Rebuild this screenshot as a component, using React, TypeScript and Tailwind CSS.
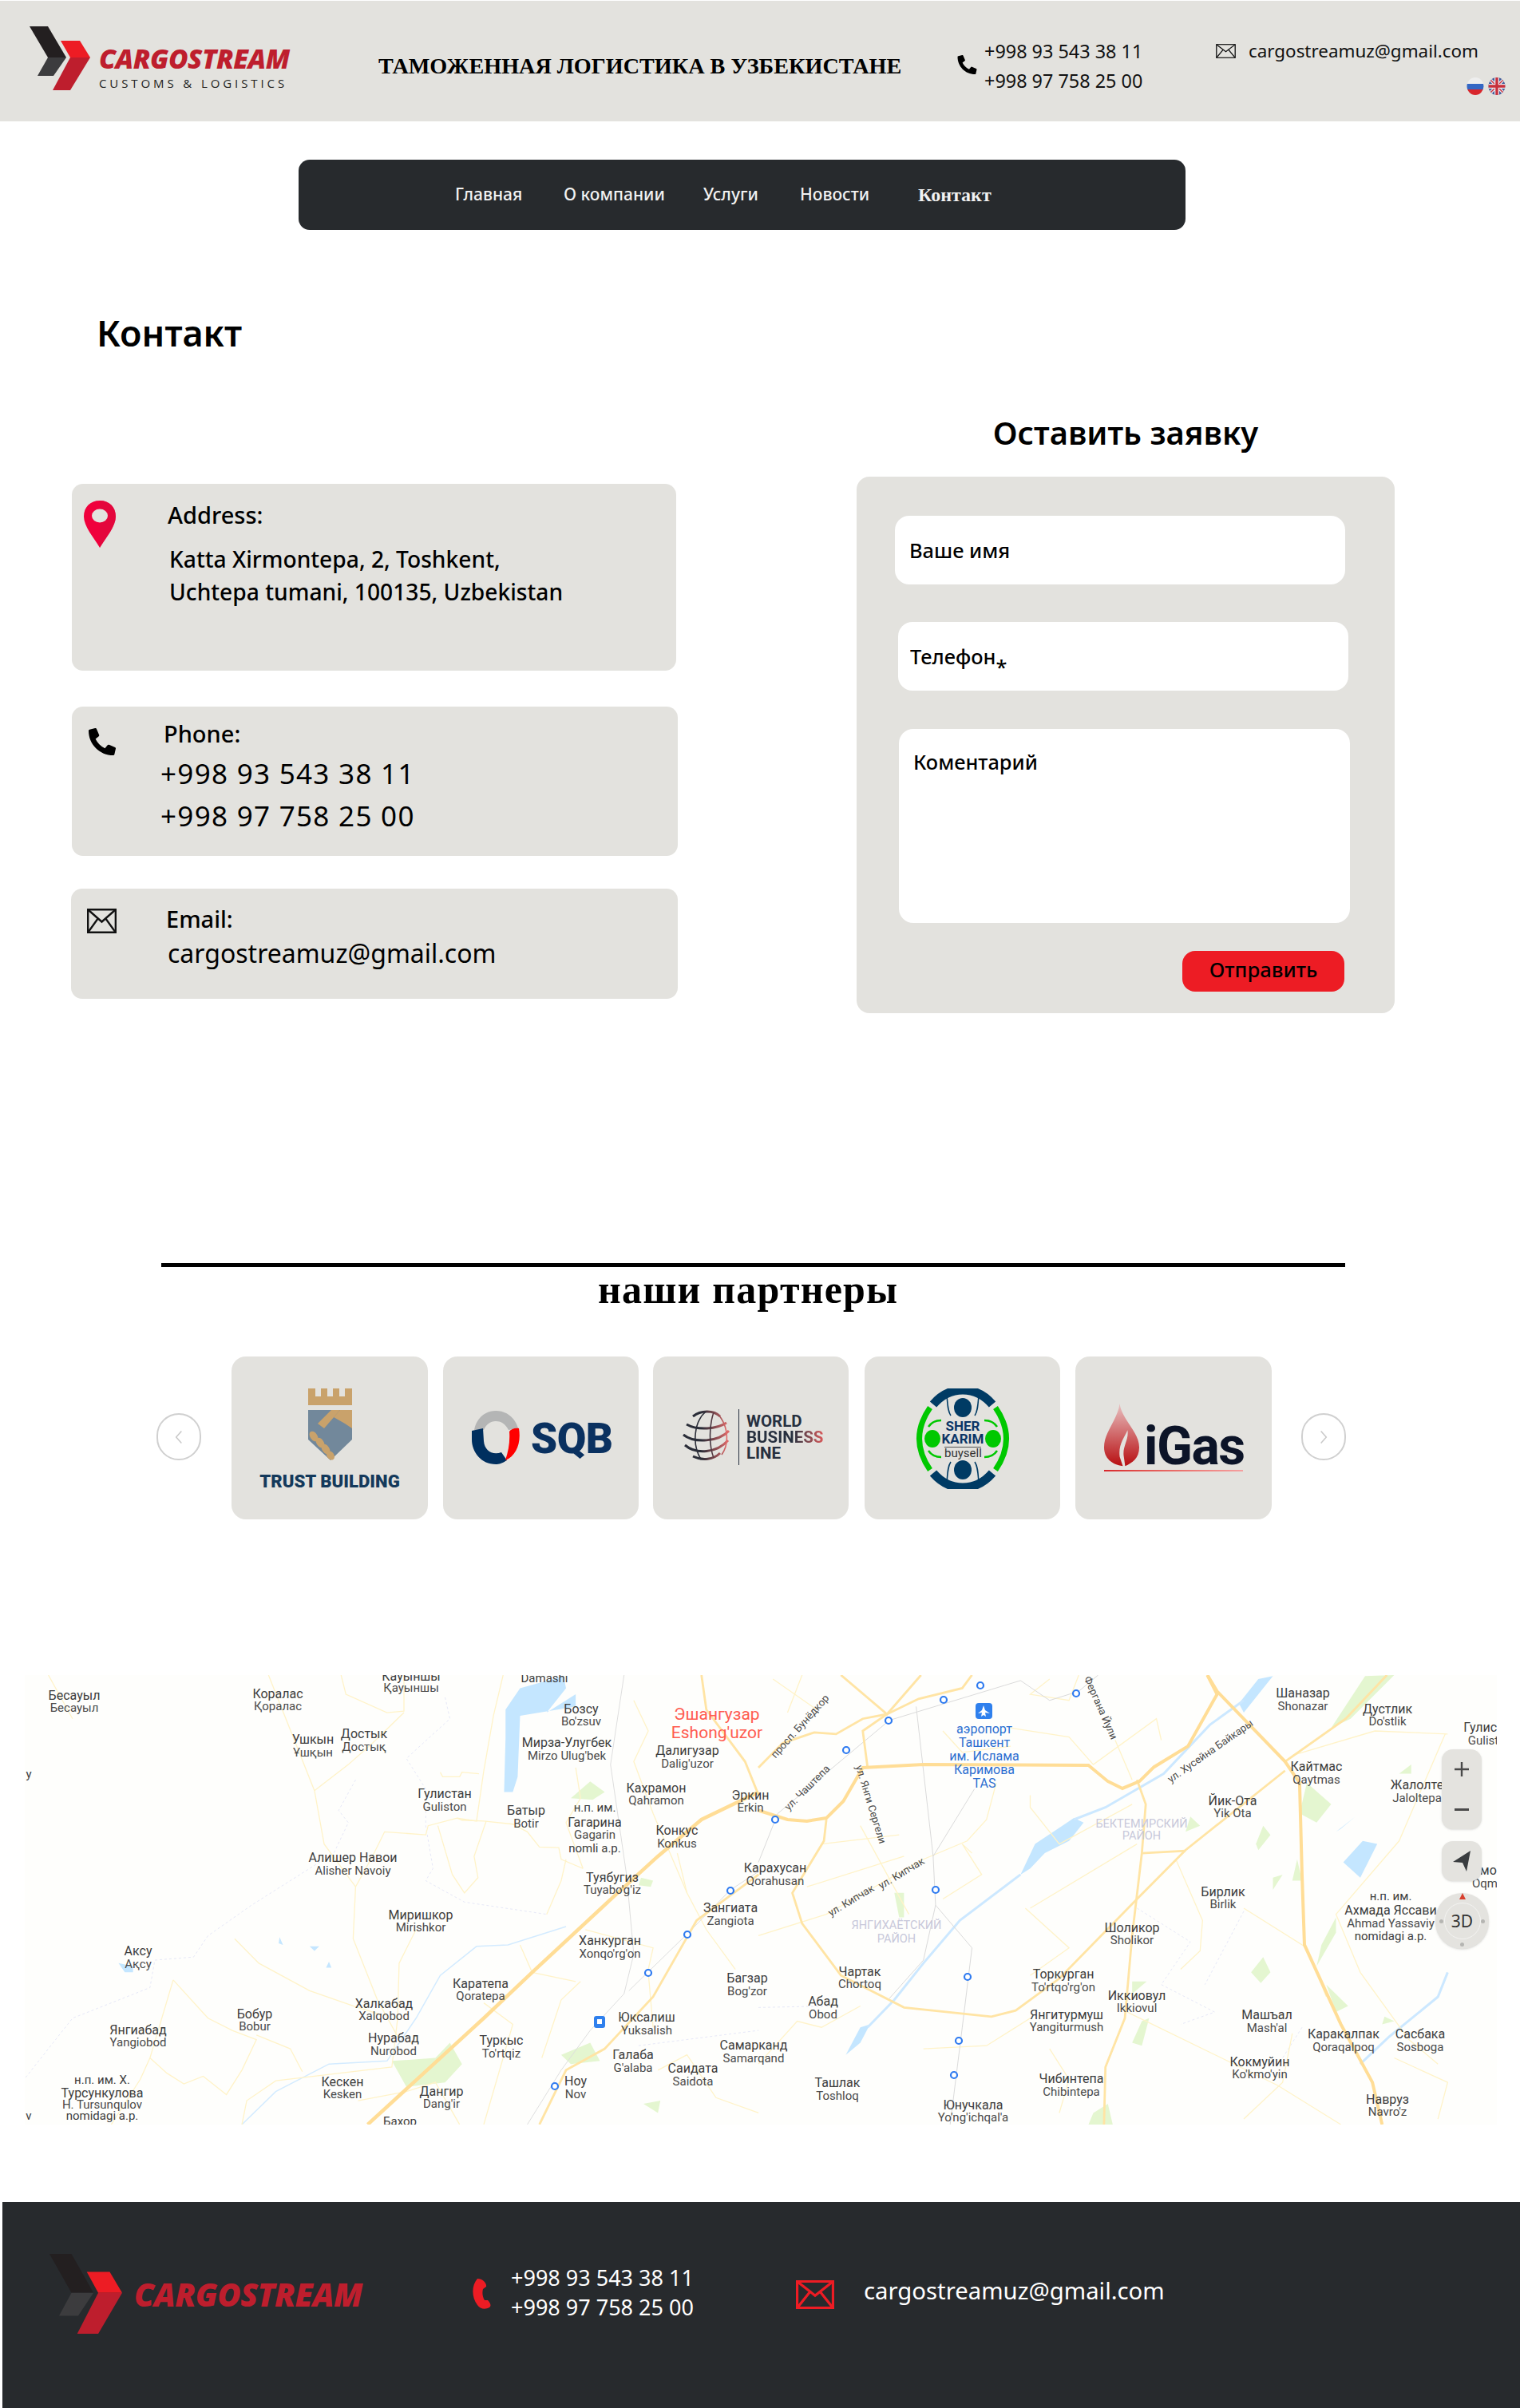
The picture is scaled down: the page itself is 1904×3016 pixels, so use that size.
import { FaPhoneAlt } from "react-icons/fa";

const panelBg = "bg-[#e3e2de]";

function LogoMark({ className }: { className?: string }) {
    return (
        <svg viewBox="0 0 76 80" className={className} preserveAspectRatio="none">
            <polygon points="0,0 23,0 46,39 23,39" fill="#231f20" />
            <polygon points="23,39 46,39 30,62 10,62" fill="#3c3c3e" />
            <polygon points="39,18 63,18 76,39 51,39" fill="#ed1c24" />
            <polygon points="51,39 76,39 51,80 29,80" fill="#be1e2d" />
        </svg>
    );
}

function EnvelopeIcon({ className, color = "#111", width = 2.4 }: { className?: string; color?: string; width?: number }) {
    return (
        <svg viewBox="0 0 38 30" className={className} preserveAspectRatio="none" fill="none" stroke={color} strokeWidth={width}>
            <rect x="1.2" y="1.2" width="35.6" height="27.6" />
            <path d="M1.5 1.5 L19 16 L36.5 1.5 M1.5 28.5 L14 12 M36.5 28.5 L24 12" />
        </svg>
    );
}

function PinIcon({ className }: { className?: string }) {
    return (
        <svg viewBox="0 0 40 59" className={className}>
            <path d="M20 0 C32 0 40 8 40 20 C40 32 28 46 20 59 C12 46 0 32 0 20 C0 8 8 0 20 0 Z" fill="#f0003c" />
            <path d="M20 59 C28 46 40 32 40 20 C40 8 32 0 20 0 L20 38 Z" fill="#dc0a3c" opacity="0.6" />
            <ellipse cx="20" cy="19" rx="10" ry="8.5" fill="#e3e2de" />
        </svg>
    );
}

function Flags() {
    return (
        <div className="flex gap-[5px]">
            <svg viewBox="0 0 22 22" className="w-[22px] h-[22px]">
                <defs>
                    <clipPath id="flag-ru"><ellipse cx="11" cy="11" rx="10.5" ry="11" /></clipPath>
                    <clipPath id="flag-uk"><ellipse cx="11" cy="11" rx="10.5" ry="11" /></clipPath>
                </defs>
                <g clipPath="url(#flag-ru)">
                    <rect width="22" height="8" fill="#eeeeee" />
                    <rect y="8" width="22" height="7" fill="#3467c4" />
                    <rect y="15" width="22" height="7" fill="#d8262c" />
                </g>
            </svg>
            <svg viewBox="0 0 22 22" className="w-[22px] h-[22px]">
                <g clipPath="url(#flag-uk)">
                    <rect width="22" height="22" fill="#3f5a98" />
                    <path d="M0 0 L22 22 M22 0 L0 22" stroke="#e8e8ee" strokeWidth="4" />
                    <path d="M0 0 L22 22 M22 0 L0 22" stroke="#c8303c" strokeWidth="1.4" />
                    <path d="M11 0 V22 M0 11 H22" stroke="#e8e8ee" strokeWidth="6" />
                    <path d="M11 0 V22 M0 11 H22" stroke="#c8303c" strokeWidth="3.4" />
                </g>
            </svg>
        </div>
    );
}

function Header() {
    return (
        <header className={`mt-px h-[151px] ${panelBg} flex`}>
            <LogoMark className="ml-[37px] mt-[32px] w-[76px] h-[80px] shrink-0" />
            <div className="ml-[11px] mt-[54px] w-[250px]">
                <div className="font-['Open_Sans'] font-extrabold italic text-[33.5px] leading-[36px] tracking-[-0.5px] text-[#be1e2d] whitespace-nowrap">CARGOSTREAM</div>
                <div className="mt-[4px] font-['Open_Sans'] text-[15px] leading-[18px] tracking-[3.9px] text-[#222] whitespace-nowrap">CUSTOMS &amp; LOGISTICS</div>
            </div>
            <div className="ml-[100px] mt-[64px] w-[669px] font-['Liberation_Serif'] font-bold text-[28.2px] leading-[36px] text-black whitespace-nowrap">ТАМОЖЕННАЯ ЛОГИСТИКА В УЗБЕКИСТАНЕ</div>
            <FaPhoneAlt className="ml-[56px] mt-[68px] w-[25px] h-[24px] text-black shrink-0" />
            <div className="ml-[9px] mt-[45px] w-[290px] text-[23.4px] leading-[37px] text-[#111] whitespace-nowrap">
                <div>+998 93 543 38 11</div>
                <div>+998 97 758 25 00</div>
            </div>
            <div className="flex flex-col items-end w-[362px]">
                <div className="mt-[48px] flex items-center w-[362px]">
                    <EnvelopeIcon className="w-[25px] h-[18px] shrink-0" width={2} />
                    <span className="ml-[16px] text-[22.4px] leading-[30px] text-[#111] whitespace-nowrap">cargostreamuz@gmail.com</span>
                </div>
                <div className="mt-[18px] mr-[-1px]"><Flags /></div>
            </div>
        </header>
    );
}

function Nav() {
    return (
        <nav className="mt-[48px] ml-[374px] w-[1111px] h-[88px] rounded-[14px] bg-[#272a2d] flex items-center text-[#f2f2f2] text-[21px] font-medium whitespace-nowrap">
            <a className="ml-[196px] w-[84px]">Главная</a>
            <a className="ml-[52px] w-[128px]">О компании</a>
            <a className="ml-[47px] w-[70px]">Услуги</a>
            <a className="ml-[51px] w-[87px]">Новости</a>
            <a className="ml-[61px] font-['Liberation_Serif'] font-bold text-[24px]">Контакт</a>
        </nav>
    );
}

function ContactInfo() {
    return (
        <div className="w-[1000px]">
            <h1 className="ml-[121px] mt-[105px] text-[45px] leading-[48px] font-semibold text-black">Контакт</h1>

            <div className={`mt-[165px] ml-[90px] w-[757px] h-[234px] rounded-[14px] ${panelBg} flex`}>
                <PinIcon className="ml-[15px] mt-[21px] w-[40px] h-[59px] shrink-0" />
                <div className="ml-[65px] text-black">
                    <div className="mt-[21px] text-[29px] leading-[36px] font-medium">Address:</div>
                    <div className="mt-[17px] ml-[2px] text-[28.2px] leading-[41px] font-medium whitespace-nowrap">
                        Katta Xirmontepa, 2, Toshkent,<br />Uchtepa tumani, 100135, Uzbekistan
                    </div>
                </div>
            </div>

            <div className={`mt-[45px] ml-[90px] w-[759px] h-[187px] rounded-[14px] ${panelBg} flex`}>
                <FaPhoneAlt className="ml-[19px] mt-[27px] w-[38px] h-[34px] text-black shrink-0" />
                <div className="ml-[54px] text-black">
                    <div className="mt-[16px] ml-[4px] text-[29px] leading-[36px] font-medium">Phone:</div>
                    <div className="mt-[5px] text-[35px] leading-[53px] tracking-[1.3px] whitespace-nowrap">
                        <div>+998 93 543 38 11</div>
                        <div>+998 97 758 25 00</div>
                    </div>
                </div>
            </div>

            <div className={`mt-[41px] ml-[89px] w-[760px] h-[138px] rounded-[14px] ${panelBg} flex`}>
                <EnvelopeIcon className="ml-[20px] mt-[25px] w-[37px] h-[31px] shrink-0" />
                <div className="ml-[62px] text-black">
                    <div className="mt-[20px] text-[29px] leading-[36px] font-medium">Email:</div>
                    <div className="mt-[4px] ml-[2px] text-[32px] leading-[42px] whitespace-nowrap">cargostreamuz@gmail.com</div>
                </div>
            </div>
        </div>
    );
}

function RequestForm() {
    const field = "block bg-white rounded-[18px] text-[25.4px] font-medium text-black placeholder:text-black outline-none";
    return (
        <div className="ml-[73px]">
            <h2 className="mt-[230px] w-[674px] text-center text-[40px] leading-[48px] font-semibold text-black">Оставить заявку</h2>
            <form className={`mt-[31px] w-[674px] h-[672px] rounded-[16px] ${panelBg} overflow-hidden`}>
                <input placeholder="Ваше имя" className={`${field} mt-[49px] ml-[48px] w-[564px] h-[86px] pl-[18px]`} />
                <input placeholder="Телефон⁎" className={`${field} mt-[47px] ml-[52px] w-[564px] h-[86px] pl-[15px]`} />
                <textarea placeholder="Коментарий" className={`${field} mt-[48px] ml-[53px] w-[565px] h-[243px] pl-[18px] pt-[22px] resize-none`} />
                <div className="mt-[35px] ml-[408px] w-[203px] h-[51px] pb-[2px] rounded-[16px] bg-[#ed1c24] text-black text-[25.6px] font-medium flex items-center justify-center">Отправить</div>
            </form>
        </div>
    );
}

function Chevron({ dir }: { dir: "left" | "right" }) {
    return (
        <div className="mb-[3px] w-[56px] h-[59px] rounded-full border-2 border-[#d0d0d0] flex items-center justify-center shrink-0">
            <svg viewBox="0 0 12 20" className="w-[10px] h-[20px]" fill="none" stroke="#c8c8c8" strokeWidth="1.8">
                <path d={dir === "left" ? "M10 1 L2 10 L10 19" : "M2 1 L10 10 L2 19"} />
            </svg>
        </div>
    );
}

function TrustLogo() {
    return (
        <div className="flex flex-col items-center pt-[40px]">
            <svg viewBox="0 0 55 90" className="w-[55px] h-[90px]">
                <path d="M0 0 H9 V10 H16 V0 H24 V10 H31 V0 H39 V10 H46 V0 H55 V21 H0 Z" fill="#c9a26b" />
                <polygon points="0,27 55,27 55,64 28,90 0,64" fill="#72889b" />
                <polygon points="29,27 40,27 20,50 12,44" fill="#c9a26b" />
                <polygon points="40,27 55,27 55,50 46,44 32,36" fill="#c9a26b" />
                <g fill="#c9a26b">
                    <ellipse cx="7" cy="60" rx="4.5" ry="7" transform="rotate(-35 7 60)" />
                    <ellipse cx="15" cy="68" rx="4.5" ry="7" transform="rotate(-35 15 68)" />
                    <ellipse cx="22" cy="76" rx="4.5" ry="7" transform="rotate(-35 22 76)" />
                    <ellipse cx="28" cy="84" rx="4.5" ry="6" transform="rotate(-35 28 84)" />
                </g>
            </svg>
            <div className="mt-[17px] font-['Roboto'] font-black text-[22.2px] leading-[18px] text-[#14395b] whitespace-nowrap">TRUST BUILDING</div>
        </div>
    );
}

function SqbLogo() {
    return (
        <div className="flex pt-[68px] pl-[36px]">
            <svg viewBox="0 0 61 67" className="w-[61px] h-[67px] shrink-0">
                <path d="M3 24 C6 8 18 0 30 0 C43 0 54 8 58 22 L46 24 C42 16 36 13 30 13 C23 13 18 17 15 24 Z" fill="#b4b5b5" />
                <path d="M0 25 L14 22 L15 38 C16 50 26 56 37 52 L44 62 C38 66 34 67 30 67 C12 67 0 52 0 36 Z" fill="#002f5f" />
                <path d="M42 62 C46 50 48 38 47 26 C49 23 54 21 59 22 C62 40 56 56 42 62 Z" fill="#ff0000" />
            </svg>
            <span className="ml-[13px] mt-[2px] font-['Roboto'] font-black text-[53px] leading-[66px] tracking-[-0.5px] text-[#0a3160]">SQB</span>
        </div>
    );
}

function WorldLogo() {
    return (
        <div className="flex pt-[67px] pl-[36px]">
            <svg viewBox="0 0 60 65" className="w-[60px] h-[65px] shrink-0" fill="none" strokeWidth="3">
                <defs>
                    <linearGradient id="globe" x1="0" y1="0" x2="1" y2="0">
                        <stop offset="0.4" stopColor="#2a2d38" />
                        <stop offset="1" stopColor="#e26a6a" />
                    </linearGradient>
                </defs>
                <g stroke="url(#globe)">
                    <path d="M14 8 C24 0 40 0 48 8 M6 18 C20 26 44 24 56 16 M2 31 C16 42 46 40 59 26 M4 44 C18 56 44 54 58 38 M14 58 C26 64 40 62 48 54" />
                    <path d="M30 2 C16 14 12 42 24 62 M40 3 C34 20 34 44 40 60 M46 6 C58 20 60 42 50 56" strokeWidth="1.6" />
                </g>
            </svg>
            <div className="ml-[11px] -mt-[1px] pl-[9px] h-[70px] border-l border-[#27303f] font-['Roboto'] font-bold text-[20.5px] leading-[20px] pt-[5px] text-[#27303f]">
                <div>WORLD</div>
                <div className="bg-gradient-to-r from-[#27303f] from-60% to-[#d9585a] bg-clip-text text-transparent">BUSINESS</div>
                <div>LINE</div>
            </div>
        </div>
    );
}

function SherKarimLogo() {
    return (
        <div className="relative ml-[64px] mt-[40px] w-[118px] h-[126px]">
            <svg viewBox="0 0 118 126" className="absolute inset-0 w-full h-full" fill="none">
                <path d="M22 20 C34 6 46 2 59 2 C72 2 84 6 96 20" stroke="#003b64" strokeWidth="11" />
                <path d="M22 106 C34 120 46 124 59 124 C72 124 84 120 96 106" stroke="#003b64" strokeWidth="11" />
                <path d="M18 24 C0 50 0 76 18 102" stroke="#00c800" strokeWidth="7" />
                <path d="M100 24 C118 50 118 76 100 102" stroke="#00c800" strokeWidth="7" />
                <ellipse cx="59" cy="24" rx="11" ry="12" fill="#003b64" />
                <ellipse cx="59" cy="102" rx="11" ry="12" fill="#003b64" />
                <ellipse cx="21" cy="63" rx="10" ry="11" fill="#00c800" />
                <ellipse cx="97" cy="63" rx="10" ry="11" fill="#00c800" />
                <path d="M39 8 C40 20 40 28 44 34 M79 8 C78 20 78 28 74 34 M39 118 C40 106 40 98 44 92 M79 118 C78 106 78 98 74 92" stroke="#003b64" strokeWidth="1.5" />
                <path d="M16 48 C20 42 26 40 32 40 M102 48 C98 42 92 40 86 40 M16 78 C20 84 26 86 32 86 M102 78 C98 84 92 86 86 86" stroke="#00c800" strokeWidth="2.5" />
            </svg>
            <div className="absolute left-0 right-0 top-[39px] text-center font-['Roboto'] font-bold text-[17px] leading-[16px] text-[#0b3566]">
                <div>SHER</div>
                <div>KARIM</div>
                <div className="mx-[36px] mt-[2px] border-t border-[#555] font-normal text-[15px] leading-[15px] text-[#333]">buysell</div>
            </div>
        </div>
    );
}

function IgasLogo() {
    return (
        <div className="relative ml-[36px] mt-[58px] w-[174px] h-[86px]">
            <svg viewBox="0 0 46 80" className="absolute left-0 top-0 w-[45px] h-[80px]">
                <defs>
                    <linearGradient id="flame" x1="0" y1="0" x2="0" y2="1">
                        <stop offset="0" stopColor="#e8c0c0" />
                        <stop offset="1" stopColor="#b80f12" />
                    </linearGradient>
                </defs>
                <path d="M20 0 C22 20 45 36 45 56 C45 70 36 76 27 80 L25 66 C24 54 32 46 30 34 C26 44 18 52 20 68 L24 80 C10 78 0 70 0 56 C0 36 18 20 20 0 Z" fill="url(#flame)" />
            </svg>
            <span className="absolute left-[50px] top-[22px] font-['Roboto'] font-bold text-[66px] leading-[66px] tracking-[-1.5px] text-[#0c1428]">iGas</span>
            <div className="absolute left-0 top-[84px] w-[174px] h-[2px] bg-gradient-to-r from-[#d8262c] to-[#f5a0a0]" />
        </div>
    );
}

function Partners() {
    const card = `h-[204px] rounded-[18px] ${panelBg} overflow-hidden shrink-0`;
    return (
        <section>
            <div className="mt-[313px] ml-[202px] w-[1483px] h-[5px] bg-black" />
            <h2 className="mt-[3px] ml-[749px] font-['Liberation_Serif'] font-bold text-[50px] leading-[50px] tracking-[1.2px] text-black whitespace-nowrap">наши партнеры</h2>
            <div className="mt-[59px] ml-[196px] flex items-center">
                <Chevron dir="left" />
                <div className={`${card} ml-[38px] w-[246px]`}><TrustLogo /></div>
                <div className={`${card} ml-[19px] w-[245px]`}><SqbLogo /></div>
                <div className={`${card} ml-[18px] w-[245px]`}><WorldLogo /></div>
                <div className={`${card} ml-[20px] w-[245px]`}><SherKarimLogo /></div>
                <div className={`${card} ml-[19px] w-[246px]`}><IgasLogo /></div>
                <div className="ml-[37px]"><Chevron dir="right" /></div>
            </div>
        </section>
    );
}

// [x, y первой строки, y второй строки, подпись, подпись латиницей]
const places: [number, number, number, string, string][] = [
    [93, 2123, 2139, "Бесауыл", "Бесауыл"], [348, 2121, 2137, "Коралас", "Қоралас"], [515, 2099, 2114, "Кауыншы", "Қауыншы"],
    [728, 2140, 2156, "Бозсу", "Bo'zsuv"], [710, 2182, 2199, "Мирза-Улугбек", "Mirzo Ulug'bek"], [392, 2178, 2195, "Ушкын", "Ұшқын"],
    [456, 2171, 2188, "Достык", "Достық"], [861, 2192, 2209, "Далигузар", "Dalig'uzor"], [557, 2246, 2263, "Гулистан", "Guliston"],
    [822, 2239, 2255, "Кахрамон", "Qahramon"], [940, 2248, 2264, "Эркин", "Erkin"], [659, 2267, 2284, "Батыр", "Botir"],
    [745, 2282, 2298, "Гагарина", "Gagarin"], [848, 2292, 2309, "Конкус", "Konkus"], [442, 2326, 2343, "Алишер Навои", "Alisher Navoiy"],
    [767, 2351, 2367, "Туябугиз", "Tuyabo'g'iz"], [971, 2339, 2356, "Карахусан", "Qorahusan"], [915, 2389, 2406, "Зангиата", "Zangiota"],
    [527, 2398, 2414, "Миришкор", "Mirishkor"], [764, 2430, 2447, "Ханкурган", "Xonqo'rg'on"], [173, 2443, 2460, "Аксу", "Ақсу"],
    [936, 2477, 2494, "Багзар", "Bog'zor"], [602, 2484, 2500, "Каратепа", "Qoratepa"], [481, 2509, 2525, "Халкабад", "Xalqobod"],
    [319, 2522, 2538, "Бобур", "Bobur"], [173, 2542, 2558, "Янгиабад", "Yangiobod"], [810, 2526, 2543, "Юксалиш", "Yuksalish"],
    [493, 2552, 2569, "Нурабад", "Nurobod"], [628, 2555, 2572, "Туркыс", "To'rtqiz"], [793, 2573, 2590, "Галаба", "G'alaba"],
    [944, 2561, 2578, "Самарканд", "Samarqand"], [868, 2590, 2607, "Саидата", "Saidota"], [429, 2607, 2623, "Кескен", "Kesken"],
    [721, 2606, 2623, "Ноу", "Nov"], [553, 2619, 2635, "Дангир", "Dang'ir"], [128, 2621, 2636, "Турсункулова", "H. Tursunqulov"],
    [1632, 2120, 2137, "Шаназар", "Shonazar"], [1738, 2140, 2156, "Дустлик", "Do'stlik"], [1649, 2212, 2229, "Кайтмас", "Qaytmas"],
    [1544, 2255, 2271, "Йик-Ота", "Yik Ota"], [1532, 2369, 2385, "Бирлик", "Birlik"], [1742, 2392, 2409, "Ахмада Яссави", "Ahmad Yassaviy"],
    [1418, 2414, 2430, "Шоликор", "Sholikor"], [1077, 2469, 2485, "Чартак", "Chortoq"], [1031, 2506, 2523, "Абад", "Obod"],
    [1332, 2472, 2489, "Торкурган", "To'rtqo'rg'on"], [1424, 2499, 2515, "Иккиовул", "Ikkiovul"], [1336, 2523, 2539, "Янгитурмуш", "Yangiturmush"],
    [1587, 2523, 2540, "Машъал", "Mash'al"], [1683, 2547, 2564, "Каракалпак", "Qoraqalpoq"], [1779, 2547, 2564, "Сасбака", "Sosboga"],
    [1578, 2582, 2598, "Кокмуйин", "Ko'kmo'yin"], [1342, 2603, 2620, "Чибинтепа", "Chibintepa"], [1049, 2608, 2625, "Ташлак", "Toshloq"],
    [1738, 2629, 2645, "Навруз", "Navro'z"], [1219, 2636, 2652, "Юнучкала", "Yo'ng'ichqal'a"],
];

const singleLabels: [number, number, string][] = [
    [682, 2102, "Damashi"], [745, 2264, "н.п. им."], [745, 2315, "nomli a.p."], [128, 2605, "н.п. им. Х."], [128, 2650, "nomidagi a.p."],
    [501, 2657, "Бахор"], [254, 2667, "Марказ"], [1742, 2375, "н.п. им."], [1742, 2425, "nomidagi a.p."], [36, 2222, "у"], [36, 2650, "v"],
];

const streets: [number, number, number, string][] = [
    [1002, 2162, -48, "просп. Бунёдкор"], [1011, 2239, -45, "ул. Чаштепа"], [1091, 2260, 73, "ул. Янги Сергели"],
    [1379, 2139, 66, "Фергана Йули"], [1516, 2193, -35, "ул. Хусейна Байкары"], [1066, 2380, -31, "ул. Кипчак"], [1129, 2346, -31, "ул. Кипчак"],
];

const westThick = ["M760 1518 L1000 1170 L1100 1020 L1270 770 L1360 640 L1450 520 L1568 430"];
const westMedium = ["M1450 47 L1460 160 L1540 330 L1568 440", "M1115 1518 L1170 1340 L1250 1270 L1350 1100 L1440 850 L1568 700"];
const westThin = [
    "M555 47 L650 425 L670 600 L735 740 L730 910 L780 1110 L822 1230", "M705 47 L715 110 L800 170 L835 165 L835 47", "M835 170 L770 270 L720 340 L650 425",
    "M1040 47 L1020 180 L1000 360 L985 525 L945 515 L885 540 L880 570 L795 560 L770 640 L735 740", "M945 515 L955 522 L1000 525 L1060 535 L1090 560 L1115 610 L1155 612 L1160 650 L1205 680",
    "M905 540 L935 700 L960 760 L988 710 L980 640 L1005 525", "M910 365 L915 380 L950 380 L955 365 L990 370", "M860 880 L825 990 L822 1170 L810 1330 L570 1375 L510 1440 L500 1518",
    "M485 910 L535 990 L640 1080 L730 1130 L790 1160", "M358 1045 L310 1300 L345 1350 L380 1385 L420 1360 L468 1420 L500 1340 L530 1240 L480 1210 L430 1170 L358 1045",
    "M310 1300 L290 1370 L230 1518", "M530 1225 L600 1270 L625 1345", "M1075 930 L1100 1020 L1190 1050", "M1210 880 L1350 940 L1340 1010",
    "M1170 650 L1160 720 L1130 830 M1190 350 L1200 450 L1170 530 L1205 680", "M1310 130 L1340 230 L1310 330 L1350 500 L1420 760", "M100 47 L150 190", "M1000 1120 L1060 1190 L1040 1300 L1000 1518",
    "M1400 630 L1420 760 L1460 880 L1520 1010 M1360 1340 L1420 1290 L1480 1430 L1568 1480", "M1340 1020 L1350 1200 M1200 1050 L1160 1110 L1120 1300", "M740 1440 L840 1410 L900 1380 L950 1518",
];
const westDashed = ["M735 390 L700 490 L720 530 L690 630 L520 800 L430 900 L400 970 L320 980 L310 1070 L150 1170 L50 1370", "M920 120 L930 190 L840 320 L880 420 L880 540 L895 680 L880 720 L960 790 L1130 830", "M1320 1260 L1568 1210"];
const westRiver = "M500 1518 L570 1410 L680 1320 L800 1310 L860 1170 L910 1030 L985 935 L1050 930 L1170 870";

const eastThick = [
    "M0 490 L60 520 L100 525 L140 515 L175 460 L215 350 L340 340 L680 342 L720 395 L750 418 L785 395 L815 348 L885 280 L945 110 L925 47",
    "M925 47 L945 100 L1085 330 L1115 400 L1120 700 L1125 930 L1200 1190 L1265 1380 L1285 1518",
];
const eastMedium = [
    "M0 350 L50 270 L115 235 L160 240 L215 190 L265 175 L330 125 L420 90 L440 47", "M170 47 L265 175 L335 47", "M265 175 L215 230 L225 350",
    "M140 520 L135 590 L70 760 L90 860 L170 1030 L300 1135 L480 1165 L530 1145 L620 1040 L780 780 L880 620 L1085 360",
    "M780 390 L798 470 L790 630 L770 900 L755 1170 L715 1330 L712 1518", "M790 630 L880 622", "M1085 330 L1210 190 L1295 47",
];
const eastThin = [
    "M735 260 L770 390", "M30 60 L120 160 M90 47 L60 170", "M0 900 L140 830 L340 650 L430 590 L470 520 L490 400", "M130 600 L290 570 M210 540 L310 830 M100 740 L300 640",
    "M560 810 L780 600 M560 440 L560 480 L620 600 L770 470", "M440 630 L420 600 L460 700 L380 780", "M1000 810 L1130 940 L1170 1100", "M860 650 L915 850 L910 950 L870 1010",
    "M760 1150 L1070 1390 L1200 1518", "M340 1270 L470 1260 L560 1170 M0 1320 L80 1180 L130 1200 L210 1130", "M600 1270 L640 1370 L620 1480", "M1420 240 L1270 230 L1100 310",
    "M1415 240 L1320 590 L1190 830 L1240 1020 L1340 1240 L1400 1320", "M550 810 L640 940 L560 1030", "M1000 1500 L1080 1380 L1100 1220", "M520 220 L640 250 L690 340 L820 190 L830 260",
    "M600 60 L560 110 L640 130 L660 47", "M380 230 L420 300 L520 280", "M1400 1500 L1420 1380 L1310 1300",
];
const eastRail = ["M325 150 L360 640 L365 800 L440 940 L420 1200 L395 1518", "M540 65 L600 130 L660 100 L700 47", "M0 660 L40 500 L270 195 L540 65", "M445 420 L360 640", "M365 800 L340 980 L270 1105"];
const eastDashed = ["M780 810 L890 920 L830 1060 L940 1150 L870 1190", "M1000 820 L920 1060", "M0 1135 L150 1130", "M1120 1200 L1080 1300"];

const waterWest = ["M1045 160 L1075 90 L1165 50 L1170 90 L1130 170 L1190 110 L1190 150 L1075 180 L1070 380 L1060 430 L1042 430 L1045 250 Z", "M245 990 L275 1000 L275 1020 L258 1020 Z", "M578 905 L585 930 L576 925 Z", "M640 935 L660 935 L650 950 Z", "M680 985 L685 1005 L674 1005 Z"];
const waterEast = [
    "M540 700 L570 600 L650 515 L670 530 L640 590 L590 630 L560 680 Z",
    "M1000 170 L1060 50 L1030 60 L990 140 Z",
    "M180 1290 L210 1200 L230 1190 L210 1250 Z", "M1205 660 L1245 590 L1275 600 L1240 710 Z", "M1190 560 L1230 510 L1200 550 Z",
];
const eastRivers = ["M225 1200 L280 1110 L340 990 L415 850 L540 700", "M650 520 L715 480 L835 370 L930 210 L1000 130", "M1420 1020 L1400 1100 L1300 1230 L1240 1320"];
const greenWest = ["M1180 450 L1220 395 L1250 430 L1225 455 Z", "M810 1310 L900 1300 L930 1250 L955 1320 L920 1380 L840 1395 Z", "M1160 1290 L1220 1250 L1240 1310 L1180 1320 Z", "M1325 710 L1350 720 L1345 740 L1320 735 Z", "M1330 1450 L1365 1440 L1360 1480 Z"];
const greenEast = [
    "M1130 400 L1180 470 L1150 530 L1115 500 Z", "M1040 540 L1055 570 L1030 620 L1025 600 Z", "M1040 970 L1055 1020 L1035 1055 L1015 1020 Z", "M1160 930 L1190 840 L1190 890 L1150 1000 Z",
    "M1180 220 L1250 50 L1310 47 L1220 190 Z", "M890 510 L910 540 L880 560 Z", "M770 1050 L800 1050 L770 1090 Z", "M790 1180 L805 1170 L790 1260 L770 1250 Z", "M1110 650 L1120 720 L1100 720 Z",
    "M1060 710 L1080 700 L1060 750 Z", "M1170 1060 L1215 1130 L1190 1150 Z", "M1290 1165 L1310 1180 L1285 1190 Z", "M690 1480 L720 1450 L730 1518 L680 1518 Z", "M280 760 L300 760 L300 840 L290 840 Z", "M1345 340 L1320 370 L1345 370 Z",
];
const transit: [number, number][] = [
    [1228, 2111], [1182, 2129], [1113, 2155], [1060, 2192], [971, 2279], [1348, 2121], [1172, 2367], [1212, 2476], [1201, 2556], [1195, 2599],
    [915, 2368], [861, 2423], [812, 2471], [695, 2613],
];

function YandexMap() {
    return (
        <div className="relative mt-[195px] ml-[31px] w-[1844px] h-[563px] bg-[#fefefc] overflow-hidden">
            <svg viewBox="31 2098 1844 563" className="absolute inset-0 w-full h-full font-['Roboto']" fill="none">
                <g transform="translate(0 2080) scale(0.606 0.3827)">
                    {greenWest.map((d) => <path key={d} d={d} fill="#e4f6d0" />)}
                    {waterWest.map((d) => <path key={d} d={d} fill="#c4e6ff" />)}
                    <path d={westRiver} stroke="#d3ebff" strokeWidth="1.5" vectorEffect="non-scaling-stroke" />
                    {westDashed.map((d) => <path key={d} d={d} stroke="#e6e8f8" strokeWidth="1" strokeDasharray="3 3" vectorEffect="non-scaling-stroke" />)}
                    {westThin.map((d) => <path key={d} d={d} stroke="#fff3c8" strokeWidth="1.3" vectorEffect="non-scaling-stroke" />)}
                    <path d="M1290 47 L1262 340 L1295 700 L1310 960 L1290 1090 L1220 1210 L1160 1340 L1090 1518 M1300 1080 L1420 895 L1510 750 L1568 690" stroke="#dedede" strokeWidth="1" vectorEffect="non-scaling-stroke" />
                    {westMedium.map((d) => <path key={d} d={d} stroke="#ffe4a4" strokeWidth="2.8" vectorEffect="non-scaling-stroke" />)}
                    {westThick.map((d) => <path key={d} d={d} stroke="#ffdd96" strokeWidth="4.5" vectorEffect="non-scaling-stroke" />)}
                </g>
                <g transform="translate(950 2080) scale(0.608 0.3827)">
                    {greenEast.map((d) => <path key={d} d={d} fill="#e4f6d0" />)}
                    {waterEast.map((d) => <path key={d} d={d} fill="#c4e6ff" />)}
                    {eastRivers.map((d) => <path key={d} d={d} stroke="#cce8ff" strokeWidth="3" vectorEffect="non-scaling-stroke" />)}
                    {eastDashed.map((d) => <path key={d} d={d} stroke="#e6e8f8" strokeWidth="1" strokeDasharray="3 3" vectorEffect="non-scaling-stroke" />)}
                    {eastThin.map((d) => <path key={d} d={d} stroke="#fff3c8" strokeWidth="1.3" vectorEffect="non-scaling-stroke" />)}
                    {eastRail.map((d) => <path key={d} d={d} stroke="#dadada" strokeWidth="1" vectorEffect="non-scaling-stroke" />)}
                    {eastMedium.map((d) => <path key={d} d={d} stroke="#ffe4a4" strokeWidth="2.8" vectorEffect="non-scaling-stroke" />)}
                    {eastThick.map((d) => <path key={d} d={d} stroke="#ffdd96" strokeWidth="4" vectorEffect="non-scaling-stroke" />)}
                </g>
                {transit.map(([x, y]) => <circle key={`${x}-${y}`} cx={x} cy={y} r="4" fill="#fff" stroke="#2f7bf0" strokeWidth="2.2" />)}
                <g fontSize="16" textAnchor="middle" dominantBaseline="central">
                    {places.map(([x, y1, y2, ru, lat]) => (
                        <g key={`${x}-${ru}`}>
                            <text x={x} y={y1} fill="#3d3d3d">{ru}</text>
                            <text x={x} y={y2} fill="#4a4a4a" fontSize="15">{lat}</text>
                        </g>
                    ))}
                    {singleLabels.map(([x, y, t]) => <text key={`${x}-${y}`} x={x} y={y} fill="#3d3d3d" fontSize="15">{t}</text>)}
                    {streets.map(([x, y, a, t]) => <text key={`${x}-${y}`} x={x} y={y} fill="#4b4b4b" fontSize="13" transform={`rotate(${a} ${x} ${y})`}>{t}</text>)}
                    <text x="898" y="2147" fill="#ff5c50" fontSize="21">Эшангузар</text>
                    <text x="898" y="2170" fill="#ff5c50" fontSize="21">Eshong'uzor</text>
                    <g fill="#2c6fd1" fontSize="16">
                        <text x="1233" y="2165">аэропорт</text>
                        <text x="1233" y="2182">Ташкент</text>
                        <text x="1233" y="2199">им. Ислама</text>
                        <text x="1233" y="2216">Каримова</text>
                        <text x="1233" y="2233">TAS</text>
                    </g>
                    <g fill="#c8c8da" fontSize="14.5">
                        <text x="1430" y="2284">БЕКТЕМИРСКИЙ</text>
                        <text x="1430" y="2299">РАЙОН</text>
                        <text x="1123" y="2411">ЯНГИХАЁТСКИЙ</text>
                        <text x="1123" y="2428">РАЙОН</text>
                    </g>
                    <text x="1858" y="2163" fill="#3d3d3d">Гулист</text>
                    <text x="1858" y="2180" fill="#4a4a4a" fontSize="15">Gulist</text>
                    <text x="1775" y="2235" fill="#3d3d3d">Жалолте</text>
                    <text x="1775" y="2252" fill="#4a4a4a" fontSize="15">Jaloltepa</text>
                    <text x="1860" y="2342" fill="#3d3d3d">кмо</text>
                    <text x="1860" y="2359" fill="#4a4a4a" fontSize="15">Oqm</text>
                </g>
                <rect x="1222" y="2133" width="21" height="20" rx="4" fill="#2f80ed" />
                <path d="M1232 2136 L1234 2142 L1240 2146 L1234 2145 L1235 2150 L1232 2148 L1229 2150 L1230 2145 L1225 2146 L1230 2142 Z" fill="#fff" />
                <rect x="744" y="2525" width="14" height="15" rx="3" fill="#2f80ed" />
                <rect x="748" y="2529" width="6" height="6" fill="#fff" />
            </svg>

            <div className="absolute left-[1775px] top-[93px] w-[50px] h-[100px] pt-[16px] gap-[40px] rounded-[14px] bg-[#e4e3df] flex flex-col items-center shadow-sm">
                <svg viewBox="0 0 18 18" className="w-[18px] h-[18px]"><path d="M9 0 V18 M0 9 H18" stroke="#4a4a4a" strokeWidth="2.4" /></svg>
                <div className="w-[18px] h-[2.5px] bg-[#4a4a4a]" />
            </div>
            <div className="absolute left-[1775px] top-[208px] w-[50px] h-[50px] rounded-[14px] bg-[#e4e3df] flex items-center justify-center shadow-sm">
                <svg viewBox="0 0 22 26" className="w-[22px] h-[26px]"><path d="M22 0 L0 14 L12 15 L17 26 Z" fill="#3a3d40" /></svg>
            </div>
            <div className="absolute left-[1767px] top-[273px] w-[67px] h-[70px] rounded-full bg-[#e4e3df] flex items-center justify-center shadow-sm">
                <div className="absolute top-0 left-[30px] w-0 h-0 border-x-[4px] border-x-transparent border-b-[8px] border-b-[#d8402f]" />
                <div className="absolute left-[5px] top-[33px] size-[5px] rounded-full bg-[#b5b5b2]" />
                <div className="absolute right-[5px] top-[33px] size-[5px] rounded-full bg-[#b5b5b2]" />
                <div className="absolute bottom-[3px] left-[31px] size-[5px] rounded-full bg-[#b5b5b2]" />
                <div className="size-[46px] rounded-full border border-[#f4f4f2] flex items-center justify-center">
                    <span className="text-[21px] leading-[24px] text-[#333]">3D</span>
                </div>
            </div>
        </div>
    );
}

function PhoneFooterIcon() {
    return (
        <svg viewBox="0 0 26 38" className="w-[26px] h-[38px] shrink-0" fill="#ed1c24">
            <path d="M8 0 C1 8 0 22 8 33 C11 38 18 39 23 36 C26 34 24 30 21 27 L17 27 C14 22 14 17 15 13 L19 10 C20 6 15 0 8 0 Z" />
        </svg>
    );
}

function Footer() {
    return (
        <footer className="mt-[97px] ml-[3px] h-[258px] bg-[#272a2d] flex">
            <LogoMark className="ml-[59px] mt-[65px] w-[91px] h-[100px] shrink-0" />
            <div className="ml-[15px] mt-[92px] w-[422px] font-['Open_Sans'] font-extrabold italic text-[40px] leading-[48px] tracking-[-0.5px] text-[#be1e2d] whitespace-nowrap">CARGOSTREAM</div>
            <div className="mt-[96px]"><PhoneFooterIcon /></div>
            <div className="ml-[24px] mt-[76px] w-[357px] text-[27px] leading-[37px] text-white whitespace-nowrap">
                <div>+998 93 543 38 11</div>
                <div>+998 97 758 25 00</div>
            </div>
            <EnvelopeIcon className="mt-[98px] w-[48px] h-[36px] shrink-0" color="#ed1c24" width={2.6} />
            <div className="ml-[37px] mt-[91px] text-[29.3px] leading-[40px] text-white whitespace-nowrap">cargostreamuz@gmail.com</div>
        </footer>
    );
}

export default function App() {
    return (
        <div className="w-[1904px] h-[3016px] bg-white font-['Noto_Sans',sans-serif] overflow-hidden">
            <Header />
            <Nav />
            <main className="flex">
                <ContactInfo />
                <RequestForm />
            </main>
            <Partners />
            <YandexMap />
            <Footer />
        </div>
    );
}
